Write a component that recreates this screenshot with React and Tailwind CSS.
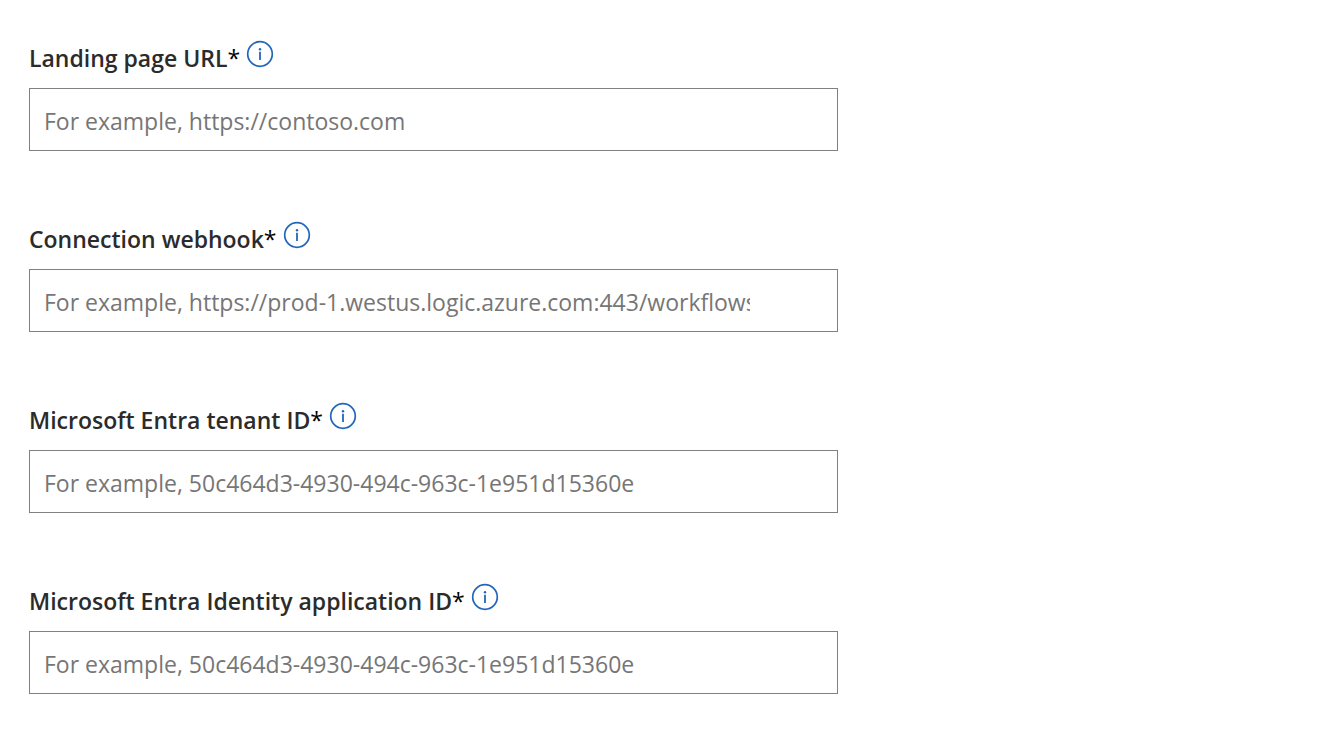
const fields = [
  { id: "landing", label: "Landing page URL", placeholder: "For example, https://contoso.com" },
  { id: "webhook", label: "Connection webhook", placeholder: "For example, https://prod-1.westus.logic.azure.com:443/workflows" },
  { id: "tenant", label: "Microsoft Entra tenant ID", placeholder: "For example, 50c464d3-4930-494c-963c-1e951d15360e" },
  { id: "application", label: "Microsoft Entra Identity application ID", placeholder: "For example, 50c464d3-4930-494c-963c-1e951d15360e" },
];

function InfoIcon() {
  return (
    <svg viewBox="0 0 28 28" className="size-7" fill="none" aria-hidden="true">
      <circle cx="14" cy="14" r="12.3" stroke="#2266bb" strokeWidth="1.7" />
      <circle cx="14" cy="9.2" r="1.2" fill="#2266bb" />
      <path d="M14 11.8v8.2" stroke="#2266bb" strokeWidth="1.8" />
    </svg>
  );
}

function Field({ id, label, placeholder }) {
  return (
    <div className="flex flex-col gap-3">
      <div className="flex h-9 items-start gap-1.5">
        <label htmlFor={id} className="text-[23px] leading-9 font-semibold text-[#2b2b2b]">
          {label}<span className="font-normal text-black">*</span>
        </label>
        <button type="button" aria-label={"About " + label}>
          <InfoIcon />
        </button>
      </div>
      <input
        id={id}
        type="text"
        required
        placeholder={placeholder}
        className="h-[63px] w-full border border-[#808080] bg-white pt-0.5 pr-[87px] pl-3.5 text-[23px] text-[#2b2b2b] placeholder:text-[#767676]"
      />
    </div>
  );
}

export default function App() {
  return (
    <main className="bg-white px-[29px] pt-10 font-['Open_Sans','Noto_Sans',sans-serif]">
      <form className="flex max-w-[809px] flex-col gap-[70px]">
        {fields.map((field) => (
          <Field key={field.id} {...field} />
        ))}
      </form>
    </main>
  );
}
